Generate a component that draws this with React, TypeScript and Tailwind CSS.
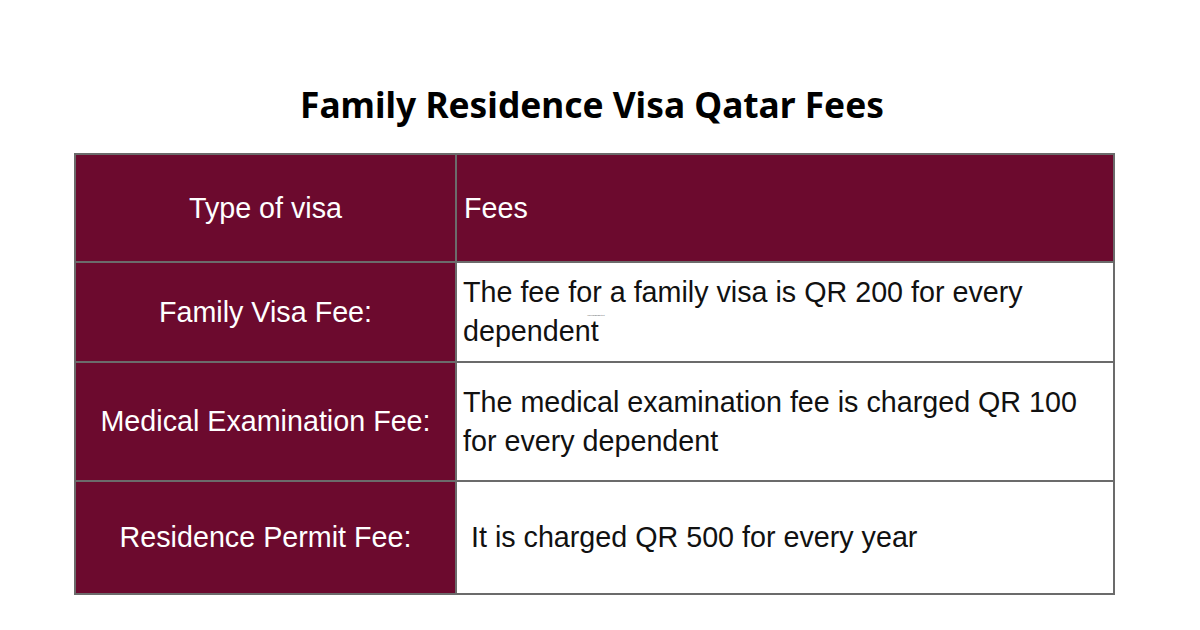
import React from 'react';

const rows = [
  { label: 'Family Visa Fee:', text: 'The fee for a family visa is QR 200 for every dependent', h: 'h-[98px]', note: true },
  { label: 'Medical Examination Fee:', text: 'The medical examination fee is charged QR 100 for every dependent', h: 'h-[117px]' },
  { label: 'Residence Permit Fee:', text: '\u00a0It is charged QR 500 for every year', h: 'h-[111px]' },
];

export default function App() {
  return (
    <div className="w-[1200px] h-[630px] bg-white overflow-hidden">
      <h1 className="pt-[80px] pr-[16px] h-[153px] text-center text-[35.3px] leading-[48px] font-bold text-black font-['Noto_Sans',sans-serif]">
        Family Residence Visa Qatar Fees
      </h1>

      <div className="ml-[74px] w-[1041px] grid grid-cols-[379px_656px] gap-[2px] p-[2px] bg-[#6b6b6b] font-['Liberation_Sans',Arial,sans-serif] text-[28.7px] leading-[39px]">
        {/* header */}
        <div className="h-[106px] bg-[#6c0a2e] text-white flex items-center justify-center">Type of visa</div>
        <div className="h-[106px] bg-[#6c0a2e] text-white flex items-center pl-[7px]">Fees</div>

        {rows.map((r) => (
          <React.Fragment key={r.label}>
            <div className={`${r.h} bg-[#6c0a2e] text-white flex items-center justify-center`}>{r.label}</div>
            <div className={`${r.h} bg-white text-[#111] flex items-center pl-[6px] pr-[20px] relative`}>
              <p>{r.text}</p>
              {r.note && (
                <span className="absolute left-[130px] top-[51px] text-[2px] leading-none text-[#444] font-['Liberation_Sans',sans-serif]">Your paragraph text</span>
              )}
            </div>
          </React.Fragment>
        ))}
      </div>
    </div>
  );
}
